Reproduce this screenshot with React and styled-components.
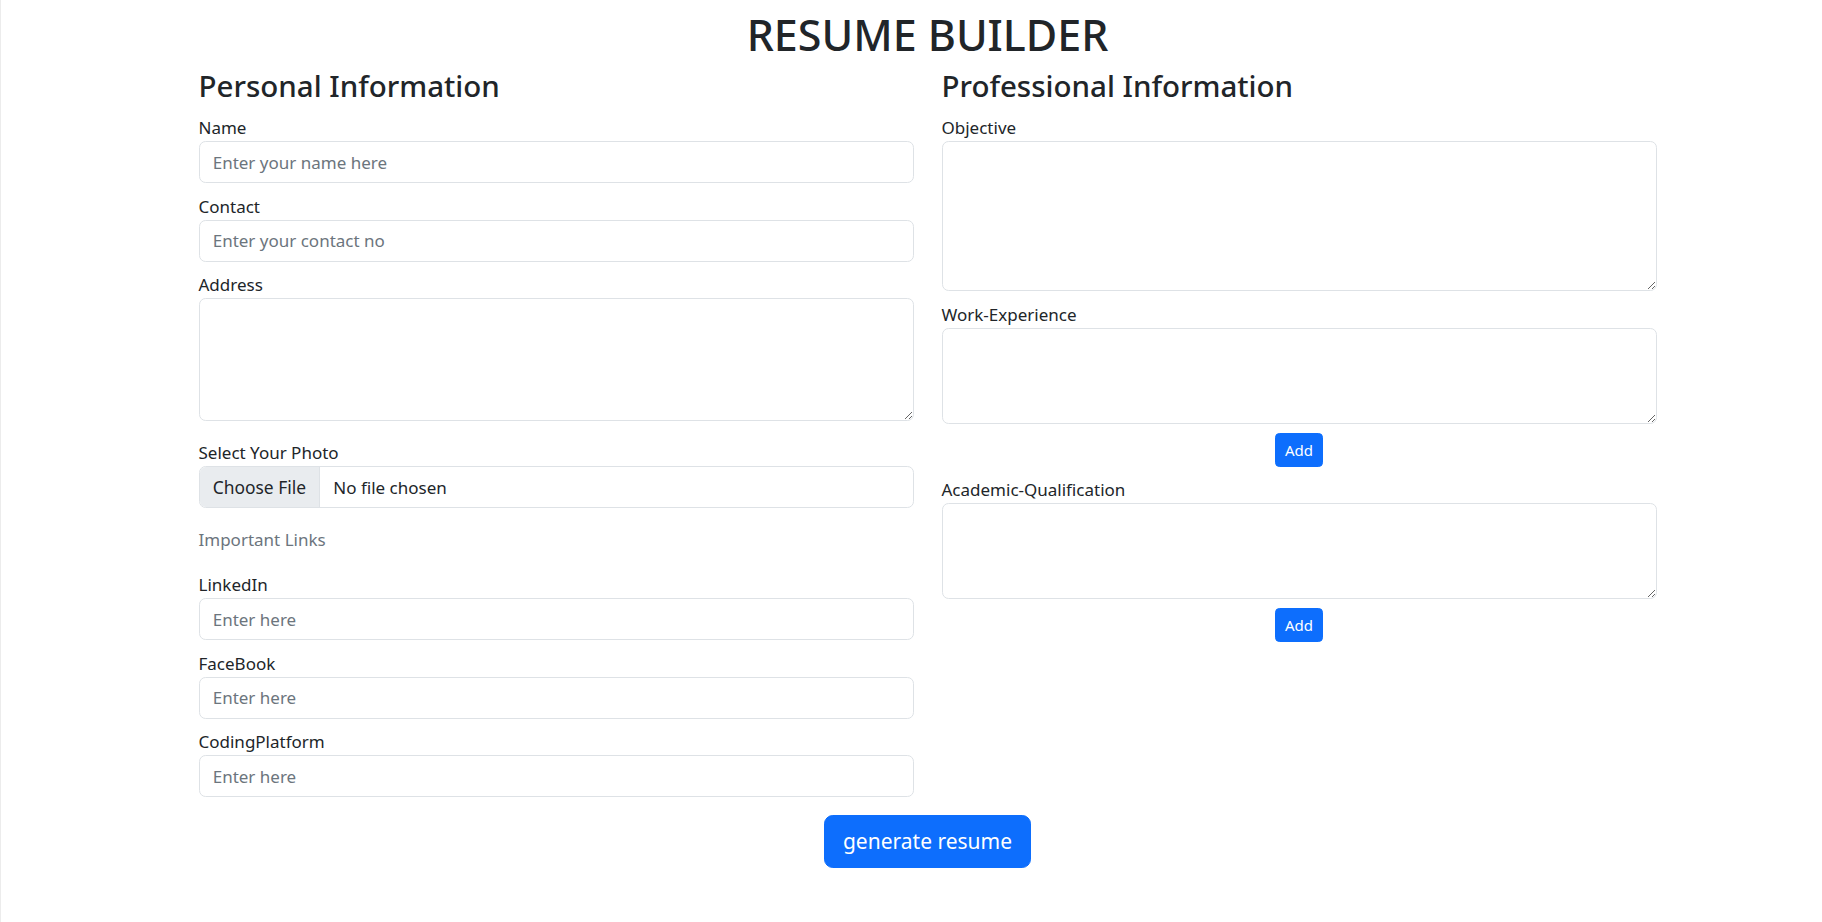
import React from 'react'
import styled, { createGlobalStyle } from 'styled-components'

const GlobalStyle = createGlobalStyle`
  * { box-sizing: border-box; }
  body {
    margin: 0;
    background: #fff;
    color: #212529;
    font-family: "Noto Sans", "Open Sans", sans-serif;
    font-size: 17px;
    line-height: 1.5;
  }
`

const Page = styled.div`
  min-height: 922px;
  padding: 9px 0 0 32px;
  border-left: 1px solid #ececec;
`

const Main = styled.form`
  width: 1458px;
  margin: 0 auto;
`

const Title = styled.h1`
  margin: 0 0 6px;
  text-align: center;
  font-size: 43px;
  font-weight: 500;
  line-height: 52.8px;
`

const Columns = styled.div`
  display: grid;
  grid-template-columns: 1fr 1fr;
  column-gap: 28px;
  align-items: start;
`

const Column = styled.div`
  display: flex;
  flex-direction: column;
`

const SectionTitle = styled.h3`
  margin: 0 0 11px;
  font-size: 29.5px;
  font-weight: 500;
  line-height: 1.2;
`

const Label = styled.label`
  display: block;
  margin: 0;
  font-size: 17px;
  line-height: 27px;
`

const Input = styled.input`
  display: block;
  width: 100%;
  height: 42px;
  margin-bottom: 9.5px;
  padding: 6.6px 13.2px;
  border: 1px solid #dee2e6;
  border-radius: 6.6px;
  font-family: inherit;
  font-size: 17px;
  color: #212529;
  background: #fff;
  outline: none;

  &::placeholder {
    color: #6c757d;
  }
`

const FileInput = styled.input`
  display: block;
  width: 100%;
  height: 42px;
  margin-bottom: 19px;
  padding: 0;
  border: 1px solid #dee2e6;
  border-radius: 6.6px;
  overflow: hidden;
  font-family: inherit;
  font-size: 17px;
  line-height: 40px;
  color: #212529;

  &::file-selector-button {
    height: 40px;
    margin: 0 13.2px 0 0;
    padding: 0 13.2px;
    border: none;
    border-right: 1px solid #dee2e6;
    border-radius: 0;
    background: #e9ecef;
    color: #212529;
    font-family: inherit;
    font-size: 17.4px;
  }
`

const TextArea = styled.textarea`
  display: block;
  width: 100%;
  height: ${p => p.$h}px;
  margin-bottom: ${p => p.$mb || 9.5}px;
  padding: 6.6px 13.2px;
  border: 1px solid #dee2e6;
  border-radius: 6.6px;
  font-family: inherit;
  font-size: 17px;
  color: #212529;
  outline: none;
`

const Muted = styled.p`
  margin: 0 0 18px;
  color: #6c757d;
  font-size: 17px;
  line-height: 26.4px;
`

const AddButton = styled.button`
  align-self: center;
  height: 34px;
  margin: 0 0 8.5px;
  padding: 0 8.8px;
  border: 1px solid #0d6efd;
  border-radius: 4.4px;
  background: #0d6efd;
  color: #fff;
  font-family: inherit;
  font-size: 15px;
  cursor: pointer;
`

const Footer = styled.div`
  display: flex;
  justify-content: center;
  padding-top: 8px;
`

const SubmitButton = styled.button`
  height: 53px;
  padding: 0 17.6px;
  border: 1px solid #0d6efd;
  border-radius: 8.8px;
  background: #0d6efd;
  color: #fff;
  font-family: inherit;
  font-size: 21px;
  cursor: pointer;
`

const App = () => {
  return (
    <>
      <GlobalStyle />
      <Page>
        <Main onSubmit={e => e.preventDefault()}>
          <Title>RESUME BUILDER</Title>
          <Columns>
            <Column>
              <SectionTitle>Personal Information</SectionTitle>
              <Label>Name</Label>
              <Input placeholder="Enter your name here" />
              <Label>Contact</Label>
              <Input placeholder="Enter your contact no" />
              <Label>Address</Label>
              <TextArea $h={123} $mb={17.6} />
              <Label>Select Your Photo</Label>
              <FileInput type="file" />
              <Muted>Important Links</Muted>
              <Label>LinkedIn</Label>
              <Input placeholder="Enter here" />
              <Label>FaceBook</Label>
              <Input placeholder="Enter here" />
              <Label>CodingPlatform</Label>
              <Input placeholder="Enter here" />
            </Column>

            <Column>
              <SectionTitle>Professional Information</SectionTitle>
              <Label>Objective</Label>
              <TextArea $h={150} />
              <Label>Work-Experience</Label>
              <TextArea $h={96} />
              <AddButton type="button">Add</AddButton>
              <Label>Academic-Qualification</Label>
              <TextArea $h={96} />
              <AddButton type="button">Add</AddButton>
            </Column>
          </Columns>
          <Footer>
            <SubmitButton type="submit">generate resume</SubmitButton>
          </Footer>
        </Main>
      </Page>
    </>
  )
}

export default App
